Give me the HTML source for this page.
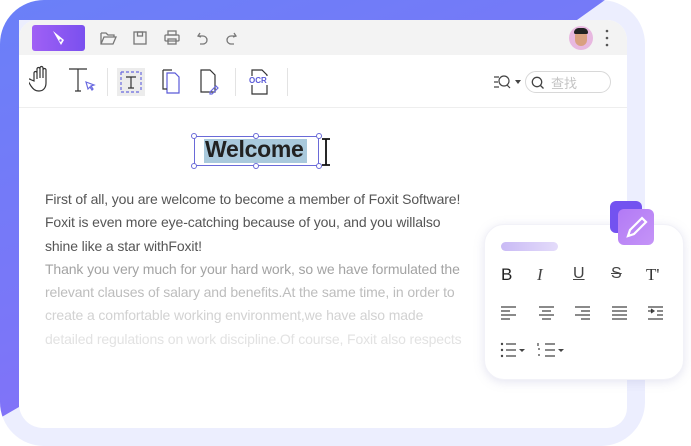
<!DOCTYPE html>
<html><head><meta charset="utf-8"><style>
*{margin:0;padding:0;box-sizing:border-box}
body{width:691px;height:446px;background:#fff;position:relative;overflow:hidden;font-family:"Liberation Sans","Noto Sans CJK SC",sans-serif}
.frame{position:absolute;left:0;top:0;width:645px;height:446px;border-radius:44px;background:#eceefe;overflow:hidden}
.grad{position:absolute;left:0;top:0;width:645px;height:446px;background:linear-gradient(160deg,#6a80f8 0%,#7b76f8 50%,#9168f6 100%);clip-path:polygon(0 0,605px 0,577px 20px,19px 20px,19px 407px,0 418px)}
.win{position:absolute;left:19px;top:20px;width:608px;height:408px;background:#fff;border-radius:18px 20px 20px 24px;overflow:hidden}
.hdr{position:absolute;left:0;top:0;width:608px;height:35px;background:#f3f3f3}
.logo{position:absolute;left:13px;top:5px;width:53px;height:26px;border-radius:3px;background:linear-gradient(90deg,#a060f5,#7a50ef)}
.tb{position:absolute;left:0;top:35px;width:608px;height:53px;border-bottom:1px solid #eee}
.sep{position:absolute;top:13px;width:1px;height:28px;background:#e3e3e3}
svg{position:absolute}
.txt{position:absolute;left:26px;top:168px;font-size:14px;line-height:23.3px;letter-spacing:-0.12px;white-space:nowrap}
.panel{position:absolute;left:484px;top:224px;width:200px;height:156px;background:#fff;border-radius:20px;box-shadow:0 2px 10px rgba(150,150,200,.25);border:1px solid #f2f2f8}
</style></head><body>
<div class="frame"><div class="grad"></div>
<div class="win">
 <div class="hdr">
  <div class="logo"><svg width="53" height="26" viewBox="0 0 53 26"><path d="M21 6 L32 15 L29 20 Z" fill="#fff"/><circle cx="28.5" cy="15.5" r="1.2" fill="#8a55f0"/></svg></div>
  <svg style="left:80px;top:9px" width="150" height="18" viewBox="0 0 150 18" fill="none" stroke="#777" stroke-width="1.3">
   <path d="M2 4h5l2 2h6v2M2 4v11h12l3-7H5l-3 7"/>
   <rect x="35" y="3" width="12" height="12"/><rect x="38.5" y="3" width="5" height="4"/>
   <rect x="69" y="2" width="8" height="4"/><rect x="66" y="6" width="14" height="6" rx="1"/><rect x="69" y="10" width="8" height="5"/>
   <path d="M101 4l-2 3 3 1M99 7h5a4 4 0 0 1 0 8h-3"/>
   <path d="M135 4l2 3-3 1M137 7h-5a4 4 0 0 0 0 8h3"/>
  </svg>
  <div style="position:absolute;left:550px;top:6px;width:24px;height:24px;border-radius:50%;background:#e8b8e0;overflow:hidden"><div style="position:absolute;left:6px;top:4px;width:12px;height:16px;border-radius:6px;background:#d9a080"></div><div style="position:absolute;left:5px;top:2px;width:14px;height:6px;border-radius:6px 6px 2px 2px;background:#222"></div></div>
  <svg style="left:586px;top:9px" width="4" height="18"><circle cx="2" cy="2" r="1.3" fill="#555"/><circle cx="2" cy="9" r="1.3" fill="#555"/><circle cx="2" cy="16" r="1.3" fill="#555"/></svg>
 </div>
 <div class="tb">
  <svg style="left:10px;top:10px" width="260" height="30" viewBox="0 0 260 30" fill="none" stroke="#333" stroke-width="1.2">
   <path d="M5 16V8a1.5 1.5 0 0 1 3 0v6V4a1.5 1.5 0 0 1 3 0v9V3a1.5 1.5 0 0 1 3 0v10V5a1.5 1.5 0 0 1 3 0v13c0 5-3 8-7 8s-6-2-8-5l-3-5a1.5 1.5 0 0 1 2.5-1.5z"/>
   <path d="M40 4h18M49 4v22M46 26h6"/><path d="M57 17l8 3-3 1 2 3-1 1-2-3-2 2z" stroke="#6a6ae0"/>
  </svg>
  <div class="sep" style="left:88px"></div>
  <div style="position:absolute;left:98px;top:13px;width:28px;height:28px;background:#ececec"></div>
  <svg style="left:98px;top:13px" width="200" height="30" viewBox="0 0 200 30" fill="none" stroke-width="1.2">
   <path d="M4 4v20M24 4v20M4 4h20M4 24h20" stroke="#6a6ae0" stroke-dasharray="3 2"/>
   <path d="M9 9h10M14 9v11M11 20h6" stroke="#333"/>
   <path d="M50 5h8l4 4v16H50z" stroke="#5a5ad8"/><path d="M46 2h9M46 2v19h4" stroke="#333"/>
   <path d="M84 2h9l5 5v17H84z" stroke="#333"/><path d="M93 24l6-6 2 2-6 6h-2z" stroke="#6a6ae0"/>
   <path d="M135 2h10l5 5v19H135z" stroke="#333"/>
  </svg>
  <div class="sep" style="left:216px"></div>
  <div style="position:absolute;left:229px;top:21px;font-size:8px;font-weight:bold;color:#5a5ad8;background:#fff;padding:0 1px">OCR</div>
  <div class="sep" style="left:268px"></div>
  <svg style="left:474px;top:19px" width="30" height="16" fill="none" stroke="#444" stroke-width="1.2"><path d="M1 3h5M1 8h4M1 13h5"/><circle cx="11" cy="7" r="5"/><path d="M14 11l3 3"/><path d="M22 6h6l-3 4z" fill="#444" stroke="none"/></svg>
  <div style="position:absolute;left:506px;top:16px;width:86px;height:22px;border:1px solid #d8d8d8;border-radius:11px"></div>
  <svg style="left:512px;top:21px" width="14" height="14" fill="none" stroke="#444" stroke-width="1.3"><circle cx="6" cy="6" r="4.7"/><path d="M9.5 9.5l3 3"/></svg>
  <div style="position:absolute;left:532px;top:18px;font-size:13px;color:#c4c4c4">查找</div>
 </div>
 <div style="position:absolute;left:175px;top:116px;width:125px;height:30px;border:1px solid #6a6ad8"></div>
 <svg style="left:171px;top:112px" width="134" height="38" fill="#fff" stroke="#6a6ad8"><circle cx="4" cy="4" r="2.5"/><circle cx="66" cy="4" r="2.5"/><circle cx="129" cy="4" r="2.5"/><circle cx="4" cy="34" r="2.5"/><circle cx="66" cy="34" r="2.5"/><circle cx="129" cy="34" r="2.5"/></svg>
 <div style="position:absolute;left:185px;top:119px;height:24px;width:103px;background:#a9c9dc"></div>
 <div style="position:absolute;left:186px;top:116px;font-size:23px;font-weight:bold;color:#222;letter-spacing:-0.3px">Welcome</div>
 <svg style="left:302px;top:117px" width="10" height="30" stroke="#111" stroke-width="1.8" fill="none"><path d="M5 2v26M1 2h8M1 28h8"/></svg>
 <div class="txt">
  <div style="color:#555">First of all, you are welcome to become a member of Foxit Software!</div>
  <div style="color:#555">Foxit is even more eye-catching because of you, and you willalso</div>
  <div style="color:#555">shine like a star withFoxit!</div>
  <div style="color:#a3a3a3">Thank you very much for your hard work, so we have formulated the</div>
  <div style="color:#bdbdbd">relevant clauses of salary and benefits.At the same time, in order to</div>
  <div style="color:#d2d2d2">create a comfortable working environment,we have also made</div>
  <div style="color:#e2e2e2">detailed regulations on work discipline.Of course, Foxit also respects</div>
 </div>
</div></div>
<div class="panel">
 <div style="position:absolute;left:16px;top:17px;width:57px;height:9px;border-radius:5px;background:linear-gradient(90deg,#c9baf5,#e4dcfa)"></div>
 <div style="position:absolute;left:16px;top:40px;font-size:17px;color:#222">B</div>
 <div style="position:absolute;left:52px;top:40px;font-size:17px;color:#444;font-family:'Liberation Serif',serif;font-style:italic">I</div>
 <div style="position:absolute;left:88px;top:40px;font-size:16px;color:#444;text-decoration:underline">U</div>
 <div style="position:absolute;left:126px;top:40px;font-size:16px;color:#444;text-decoration:line-through">S</div>
 <div style="position:absolute;left:161px;top:40px;font-size:17px;color:#333;font-family:'Liberation Serif',serif">T'</div>
 <svg style="left:15px;top:80px" width="170" height="16" stroke="#444" stroke-width="1.2">
  <path d="M1 2h15M1 6h9M1 10h15M1 14h9"/>
  <path d="M39 2h15M42 6h9M39 10h15M42 14h9"/>
  <path d="M75 2h15M81 6h9M75 10h15M81 14h9"/>
  <path d="M112 2h15M112 6h15M112 10h15M112 14h15"/>
  <path d="M148 2h15M148 6h6M151 4l3 2-3 2M157 6h6M157 10h6M148 14h15"/>
 </svg>
 <svg style="left:15px;top:117px" width="80" height="16" stroke="#444" stroke-width="1.2" fill="#444">
  <circle cx="2" cy="2" r="1.2" stroke="none"/><circle cx="2" cy="8" r="1.2" stroke="none"/><circle cx="2" cy="14" r="1.2" stroke="none"/>
  <path d="M6 2h10M6 8h10M6 14h10"/><path d="M19 7h6l-3 3z" stroke="none"/>
  <path d="M45 2h10M45 8h10M45 14h10M38 1v3M38 7h2M38 13h2"/><path d="M58 7h6l-3 3z" stroke="none"/>
 </svg>
</div>
<div style="position:absolute;left:610px;top:201px;width:32px;height:32px;border-radius:6px;background:#7352f0"></div>
<div style="position:absolute;left:618px;top:209px;width:36px;height:36px;border-radius:6px;background:linear-gradient(135deg,#b27af6,#c594f7)"></div>
<svg style="left:618px;top:209px" width="36" height="36" fill="none" stroke="#fff" stroke-width="2.2"><path d="M10 27l2-6 12-12 4 4-12 12z"/></svg>
</body></html>
